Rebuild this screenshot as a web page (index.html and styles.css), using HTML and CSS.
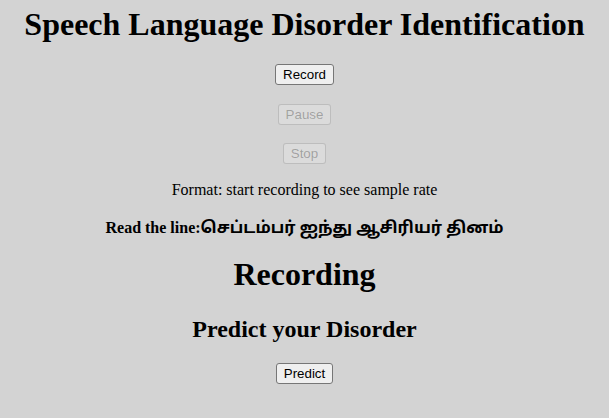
FILE: index.html
```html
<!DOCTYPE html>
<html lang="en">
<head>
<meta charset="utf-8">
<title>Speech Language Disorder Identification</title>
<link rel="stylesheet" href="styles.css">
</head>
<body>
<main class="page">
  <h1 class="title">Speech Language Disorder Identification</h1>
  <div class="controls">
    <button class="btn" type="button">Record</button>
    <button class="btn" type="button" disabled>Pause</button>
    <button class="btn" type="button" disabled>Stop</button>
  </div>
  <p class="format">Format: start recording to see sample rate</p>
  <p class="read"><b class="read-label">Read the line:</b><span class="tamil">செப்டம்பர் ஐந்து ஆசிரியர் தினம்</span></p>
  <h1 class="section-title">Recording</h1>
  <h2 class="predict-title">Predict your Disorder</h2>
  <div class="predict-row">
    <button class="btn" type="button">Predict</button>
  </div>
</main>
</body>
</html>
```
FILE: styles.css
```css
html, body {
  margin: 0;
  padding: 0;
  background: #d3d3d3;
}

body {
  font-family: "Liberation Serif", "Times New Roman", serif;
  font-size: 16px;
  color: #000;
}

.page {
  padding-top: 6px;
  text-align: center;
}

.title {
  font-size: 32px;
  font-weight: bold;
  line-height: 37px;
  margin: 0 0 21px;
}

.controls {
  display: flex;
  flex-direction: column;
  align-items: center;
  gap: 18.5px;
}

.btn {
  box-sizing: border-box;
  height: 21px;
  font-family: "Liberation Sans", Arial, sans-serif;
  font-size: 13.333px;
  line-height: 15px;
  color: #000;
  background: #efefef;
  border: 1px solid #767676;
  border-radius: 3px;
  padding: 2px 7px;
  margin: 0;
}

.btn:disabled {
  color: rgba(16, 16, 16, 0.3);
  background: rgba(239, 239, 239, 0.3);
  border-color: rgba(118, 118, 118, 0.3);
}

.format {
  margin: 16.5px 0 0;
  line-height: 18px;
}

.read {
  margin: 16px 0 0;
  height: 26px;
  line-height: 26px;
}

.read-label {
  font-weight: bold;
}

.tamil {
  font-family: "Noto Sans Tamil", "Lohit Tamil", "Nirmala UI", "Latha", sans-serif;
  font-weight: bold;
  font-size: 16.3px;
}

.section-title {
  font-size: 32px;
  font-weight: bold;
  line-height: 37px;
  margin: 15.5px 0 21.5px;
}

.predict-title {
  font-size: 24px;
  font-weight: bold;
  line-height: 28px;
  margin: 0 0 20px;
}

.predict-row {
  display: flex;
  justify-content: center;
}
```
